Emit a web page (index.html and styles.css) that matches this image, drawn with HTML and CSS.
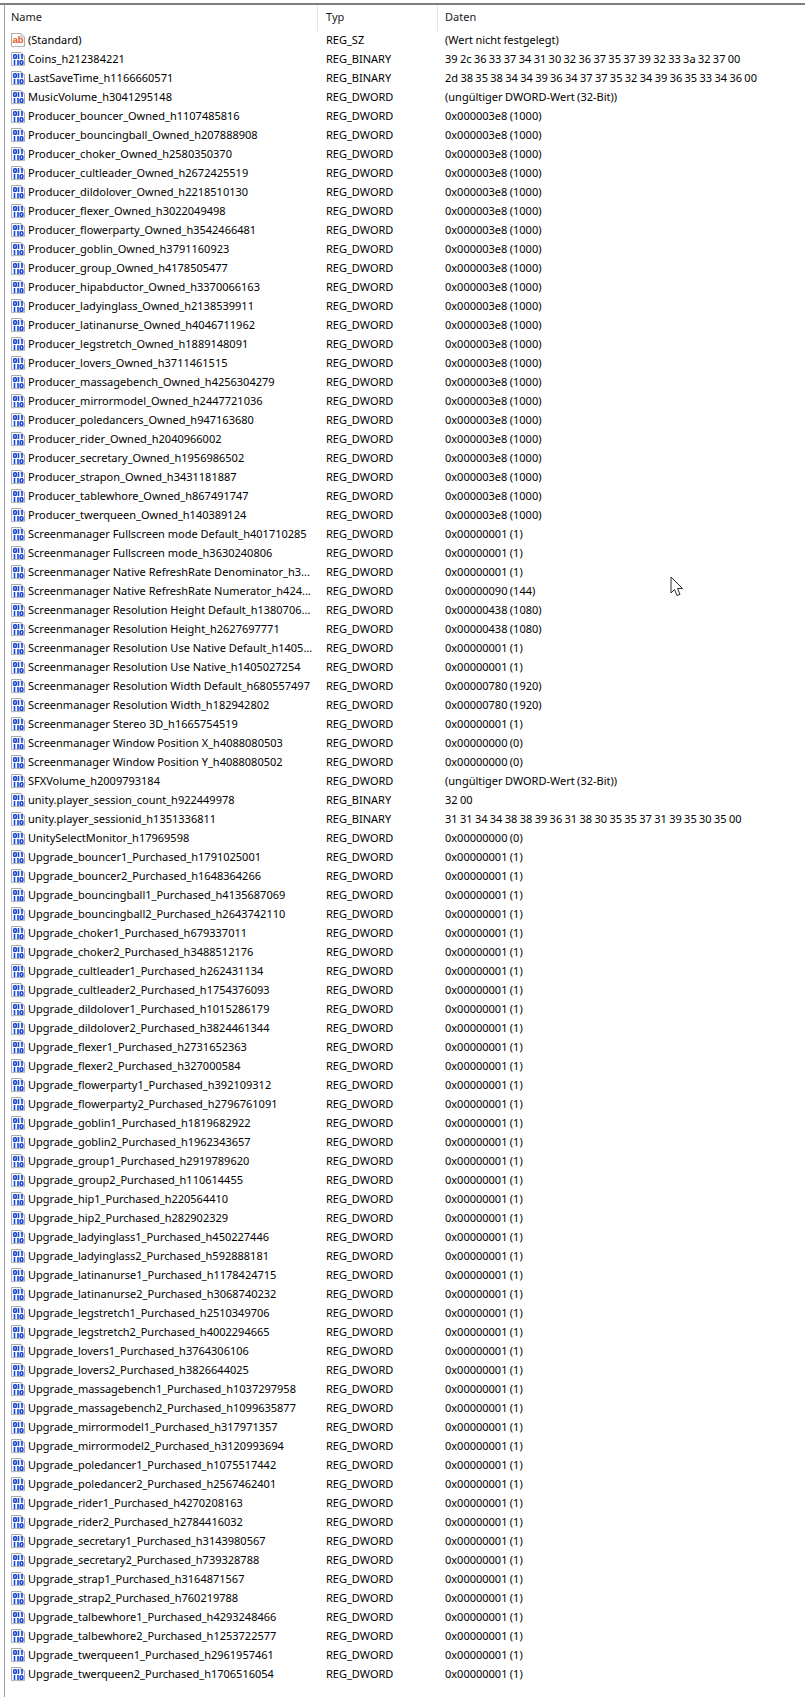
FILE: index.html
```html
<!DOCTYPE html>
<html lang="de">
<head>
    <meta charset="UTF-8">
    <title>Registrierungs-Editor</title>
    <link rel="stylesheet" href="styles.css">
</head>
<body>

    <!-- icon definitions -->
    <svg class="defs" width="0" height="0">
        <symbol id="ico-page" viewBox="0 0 16 16">
            <path d="M1.5 1.5 H11 L14.5 5 V14.5 C12.5 13.5 11 15.5 8 14.5 C5.5 13.5 3.5 15.5 1.5 14.5 Z" fill="#fff" stroke="#a9a9a9"/>
            <path d="M11 1.5 V5 H14.5" fill="#e8e8e8" stroke="#b8b8b8"/>
        </symbol>
        <symbol id="ico-bin" viewBox="0 0 16 16">
            <use href="#ico-page"/>
            <g fill="none" stroke="#1a46d8" stroke-width="1.6">
                <rect x="3.7" y="3.7" width="2.6" height="3.6" rx=".8"/>
                <path d="M8.5 3 V8 M12 3 V8"/>
                <path d="M4.5 9 V14 M8 9 V14"/>
                <rect x="10.2" y="9.7" width="2.6" height="3.6" rx=".8"/>
            </g>
        </symbol>
    </svg>

    <div class="pane">
        <div class="row head">
            <span class="cell">Name</span>
            <span class="cell">Typ</span>
            <span class="cell">Daten</span>
        </div>

        <div class="row"><span class="name"><svg class="ico" viewBox="0 0 16 16"><use href="#ico-page"/><text class="ab" x="2.4" y="11.2">ab</text></svg>(Standard)</span><span>REG_SZ</span><span class="data">(Wert nicht festgelegt)</span></div>
        <div class="row"><span class="name"><svg class="ico"><use href="#ico-bin"/></svg>Coins_h212384221</span><span>REG_BINARY</span><span class="data">39 2c 36 33 37 34 31 30 32 36 37 35 37 39 32 33 3a 32 37 00</span></div>
        <div class="row"><span class="name"><svg class="ico"><use href="#ico-bin"/></svg>LastSaveTime_h1166660571</span><span>REG_BINARY</span><span class="data">2d 38 35 38 34 34 39 36 34 37 37 35 32 34 39 36 35 33 34 36 00</span></div>
        <div class="row"><span class="name"><svg class="ico"><use href="#ico-bin"/></svg>MusicVolume_h3041295148</span><span>REG_DWORD</span><span class="data">(ungültiger DWORD-Wert (32-Bit))</span></div>

        <!-- Producer -->
        <div class="row"><span class="name"><svg class="ico"><use href="#ico-bin"/></svg>Producer_bouncer_Owned_h1107485816</span><span>REG_DWORD</span><span class="data">0x000003e8 (1000)</span></div>
        <div class="row"><span class="name"><svg class="ico"><use href="#ico-bin"/></svg>Producer_bouncingball_Owned_h207888908</span><span>REG_DWORD</span><span class="data">0x000003e8 (1000)</span></div>
        <div class="row"><span class="name"><svg class="ico"><use href="#ico-bin"/></svg>Producer_choker_Owned_h2580350370</span><span>REG_DWORD</span><span class="data">0x000003e8 (1000)</span></div>
        <div class="row"><span class="name"><svg class="ico"><use href="#ico-bin"/></svg>Producer_cultleader_Owned_h2672425519</span><span>REG_DWORD</span><span class="data">0x000003e8 (1000)</span></div>
        <div class="row"><span class="name"><svg class="ico"><use href="#ico-bin"/></svg>Producer_dildolover_Owned_h2218510130</span><span>REG_DWORD</span><span class="data">0x000003e8 (1000)</span></div>
        <div class="row"><span class="name"><svg class="ico"><use href="#ico-bin"/></svg>Producer_flexer_Owned_h3022049498</span><span>REG_DWORD</span><span class="data">0x000003e8 (1000)</span></div>
        <div class="row"><span class="name"><svg class="ico"><use href="#ico-bin"/></svg>Producer_flowerparty_Owned_h3542466481</span><span>REG_DWORD</span><span class="data">0x000003e8 (1000)</span></div>
        <div class="row"><span class="name"><svg class="ico"><use href="#ico-bin"/></svg>Producer_goblin_Owned_h3791160923</span><span>REG_DWORD</span><span class="data">0x000003e8 (1000)</span></div>
        <div class="row"><span class="name"><svg class="ico"><use href="#ico-bin"/></svg>Producer_group_Owned_h4178505477</span><span>REG_DWORD</span><span class="data">0x000003e8 (1000)</span></div>
        <div class="row"><span class="name"><svg class="ico"><use href="#ico-bin"/></svg>Producer_hipabductor_Owned_h3370066163</span><span>REG_DWORD</span><span class="data">0x000003e8 (1000)</span></div>
        <div class="row"><span class="name"><svg class="ico"><use href="#ico-bin"/></svg>Producer_ladyinglass_Owned_h2138539911</span><span>REG_DWORD</span><span class="data">0x000003e8 (1000)</span></div>
        <div class="row"><span class="name"><svg class="ico"><use href="#ico-bin"/></svg>Producer_latinanurse_Owned_h4046711962</span><span>REG_DWORD</span><span class="data">0x000003e8 (1000)</span></div>
        <div class="row"><span class="name"><svg class="ico"><use href="#ico-bin"/></svg>Producer_legstretch_Owned_h1889148091</span><span>REG_DWORD</span><span class="data">0x000003e8 (1000)</span></div>
        <div class="row"><span class="name"><svg class="ico"><use href="#ico-bin"/></svg>Producer_lovers_Owned_h3711461515</span><span>REG_DWORD</span><span class="data">0x000003e8 (1000)</span></div>
        <div class="row"><span class="name"><svg class="ico"><use href="#ico-bin"/></svg>Producer_massagebench_Owned_h4256304279</span><span>REG_DWORD</span><span class="data">0x000003e8 (1000)</span></div>
        <div class="row"><span class="name"><svg class="ico"><use href="#ico-bin"/></svg>Producer_mirrormodel_Owned_h2447721036</span><span>REG_DWORD</span><span class="data">0x000003e8 (1000)</span></div>
        <div class="row"><span class="name"><svg class="ico"><use href="#ico-bin"/></svg>Producer_poledancers_Owned_h947163680</span><span>REG_DWORD</span><span class="data">0x000003e8 (1000)</span></div>
        <div class="row"><span class="name"><svg class="ico"><use href="#ico-bin"/></svg>Producer_rider_Owned_h2040966002</span><span>REG_DWORD</span><span class="data">0x000003e8 (1000)</span></div>
        <div class="row"><span class="name"><svg class="ico"><use href="#ico-bin"/></svg>Producer_secretary_Owned_h1956986502</span><span>REG_DWORD</span><span class="data">0x000003e8 (1000)</span></div>
        <div class="row"><span class="name"><svg class="ico"><use href="#ico-bin"/></svg>Producer_strapon_Owned_h3431181887</span><span>REG_DWORD</span><span class="data">0x000003e8 (1000)</span></div>
        <div class="row"><span class="name"><svg class="ico"><use href="#ico-bin"/></svg>Producer_tablewhore_Owned_h867491747</span><span>REG_DWORD</span><span class="data">0x000003e8 (1000)</span></div>
        <div class="row"><span class="name"><svg class="ico"><use href="#ico-bin"/></svg>Producer_twerqueen_Owned_h140389124</span><span>REG_DWORD</span><span class="data">0x000003e8 (1000)</span></div>

        <!-- Screenmanager -->
        <div class="row"><span class="name"><svg class="ico"><use href="#ico-bin"/></svg>Screenmanager Fullscreen mode Default_h401710285</span><span>REG_DWORD</span><span class="data">0x00000001 (1)</span></div>
        <div class="row"><span class="name"><svg class="ico"><use href="#ico-bin"/></svg>Screenmanager Fullscreen mode_h3630240806</span><span>REG_DWORD</span><span class="data">0x00000001 (1)</span></div>
        <div class="row"><span class="name"><svg class="ico"><use href="#ico-bin"/></svg>Screenmanager Native RefreshRate Denominator_h3...</span><span>REG_DWORD</span><span class="data">0x00000001 (1)</span></div>
        <div class="row"><span class="name"><svg class="ico"><use href="#ico-bin"/></svg>Screenmanager Native RefreshRate Numerator_h424...</span><span>REG_DWORD</span><span class="data">0x00000090 (144)</span></div>
        <div class="row"><span class="name"><svg class="ico"><use href="#ico-bin"/></svg>Screenmanager Resolution Height Default_h1380706...</span><span>REG_DWORD</span><span class="data">0x00000438 (1080)</span></div>
        <div class="row"><span class="name"><svg class="ico"><use href="#ico-bin"/></svg>Screenmanager Resolution Height_h2627697771</span><span>REG_DWORD</span><span class="data">0x00000438 (1080)</span></div>
        <div class="row"><span class="name"><svg class="ico"><use href="#ico-bin"/></svg>Screenmanager Resolution Use Native Default_h1405...</span><span>REG_DWORD</span><span class="data">0x00000001 (1)</span></div>
        <div class="row"><span class="name"><svg class="ico"><use href="#ico-bin"/></svg>Screenmanager Resolution Use Native_h1405027254</span><span>REG_DWORD</span><span class="data">0x00000001 (1)</span></div>
        <div class="row"><span class="name"><svg class="ico"><use href="#ico-bin"/></svg>Screenmanager Resolution Width Default_h680557497</span><span>REG_DWORD</span><span class="data">0x00000780 (1920)</span></div>
        <div class="row"><span class="name"><svg class="ico"><use href="#ico-bin"/></svg>Screenmanager Resolution Width_h182942802</span><span>REG_DWORD</span><span class="data">0x00000780 (1920)</span></div>
        <div class="row"><span class="name"><svg class="ico"><use href="#ico-bin"/></svg>Screenmanager Stereo 3D_h1665754519</span><span>REG_DWORD</span><span class="data">0x00000001 (1)</span></div>
        <div class="row"><span class="name"><svg class="ico"><use href="#ico-bin"/></svg>Screenmanager Window Position X_h4088080503</span><span>REG_DWORD</span><span class="data">0x00000000 (0)</span></div>
        <div class="row"><span class="name"><svg class="ico"><use href="#ico-bin"/></svg>Screenmanager Window Position Y_h4088080502</span><span>REG_DWORD</span><span class="data">0x00000000 (0)</span></div>
        <div class="row"><span class="name"><svg class="ico"><use href="#ico-bin"/></svg>SFXVolume_h2009793184</span><span>REG_DWORD</span><span class="data">(ungültiger DWORD-Wert (32-Bit))</span></div>
        <div class="row"><span class="name"><svg class="ico"><use href="#ico-bin"/></svg>unity.player_session_count_h922449978</span><span>REG_BINARY</span><span class="data">32 00</span></div>
        <div class="row"><span class="name"><svg class="ico"><use href="#ico-bin"/></svg>unity.player_sessionid_h1351336811</span><span>REG_BINARY</span><span class="data">31 31 34 34 38 38 39 36 31 38 30 35 35 37 31 39 35 30 35 00</span></div>
        <div class="row"><span class="name"><svg class="ico"><use href="#ico-bin"/></svg>UnitySelectMonitor_h17969598</span><span>REG_DWORD</span><span class="data">0x00000000 (0)</span></div>

        <!-- Upgrade -->
        <div class="row"><span class="name"><svg class="ico"><use href="#ico-bin"/></svg>Upgrade_bouncer1_Purchased_h1791025001</span><span>REG_DWORD</span><span class="data">0x00000001 (1)</span></div>
        <div class="row"><span class="name"><svg class="ico"><use href="#ico-bin"/></svg>Upgrade_bouncer2_Purchased_h1648364266</span><span>REG_DWORD</span><span class="data">0x00000001 (1)</span></div>
        <div class="row"><span class="name"><svg class="ico"><use href="#ico-bin"/></svg>Upgrade_bouncingball1_Purchased_h4135687069</span><span>REG_DWORD</span><span class="data">0x00000001 (1)</span></div>
        <div class="row"><span class="name"><svg class="ico"><use href="#ico-bin"/></svg>Upgrade_bouncingball2_Purchased_h2643742110</span><span>REG_DWORD</span><span class="data">0x00000001 (1)</span></div>
        <div class="row"><span class="name"><svg class="ico"><use href="#ico-bin"/></svg>Upgrade_choker1_Purchased_h679337011</span><span>REG_DWORD</span><span class="data">0x00000001 (1)</span></div>
        <div class="row"><span class="name"><svg class="ico"><use href="#ico-bin"/></svg>Upgrade_choker2_Purchased_h3488512176</span><span>REG_DWORD</span><span class="data">0x00000001 (1)</span></div>
        <div class="row"><span class="name"><svg class="ico"><use href="#ico-bin"/></svg>Upgrade_cultleader1_Purchased_h262431134</span><span>REG_DWORD</span><span class="data">0x00000001 (1)</span></div>
        <div class="row"><span class="name"><svg class="ico"><use href="#ico-bin"/></svg>Upgrade_cultleader2_Purchased_h1754376093</span><span>REG_DWORD</span><span class="data">0x00000001 (1)</span></div>
        <div class="row"><span class="name"><svg class="ico"><use href="#ico-bin"/></svg>Upgrade_dildolover1_Purchased_h1015286179</span><span>REG_DWORD</span><span class="data">0x00000001 (1)</span></div>
        <div class="row"><span class="name"><svg class="ico"><use href="#ico-bin"/></svg>Upgrade_dildolover2_Purchased_h3824461344</span><span>REG_DWORD</span><span class="data">0x00000001 (1)</span></div>
        <div class="row"><span class="name"><svg class="ico"><use href="#ico-bin"/></svg>Upgrade_flexer1_Purchased_h2731652363</span><span>REG_DWORD</span><span class="data">0x00000001 (1)</span></div>
        <div class="row"><span class="name"><svg class="ico"><use href="#ico-bin"/></svg>Upgrade_flexer2_Purchased_h327000584</span><span>REG_DWORD</span><span class="data">0x00000001 (1)</span></div>
        <div class="row"><span class="name"><svg class="ico"><use href="#ico-bin"/></svg>Upgrade_flowerparty1_Purchased_h392109312</span><span>REG_DWORD</span><span class="data">0x00000001 (1)</span></div>
        <div class="row"><span class="name"><svg class="ico"><use href="#ico-bin"/></svg>Upgrade_flowerparty2_Purchased_h2796761091</span><span>REG_DWORD</span><span class="data">0x00000001 (1)</span></div>
        <div class="row"><span class="name"><svg class="ico"><use href="#ico-bin"/></svg>Upgrade_goblin1_Purchased_h1819682922</span><span>REG_DWORD</span><span class="data">0x00000001 (1)</span></div>
        <div class="row"><span class="name"><svg class="ico"><use href="#ico-bin"/></svg>Upgrade_goblin2_Purchased_h1962343657</span><span>REG_DWORD</span><span class="data">0x00000001 (1)</span></div>
        <div class="row"><span class="name"><svg class="ico"><use href="#ico-bin"/></svg>Upgrade_group1_Purchased_h2919789620</span><span>REG_DWORD</span><span class="data">0x00000001 (1)</span></div>
        <div class="row"><span class="name"><svg class="ico"><use href="#ico-bin"/></svg>Upgrade_group2_Purchased_h110614455</span><span>REG_DWORD</span><span class="data">0x00000001 (1)</span></div>
        <div class="row"><span class="name"><svg class="ico"><use href="#ico-bin"/></svg>Upgrade_hip1_Purchased_h220564410</span><span>REG_DWORD</span><span class="data">0x00000001 (1)</span></div>
        <div class="row"><span class="name"><svg class="ico"><use href="#ico-bin"/></svg>Upgrade_hip2_Purchased_h282902329</span><span>REG_DWORD</span><span class="data">0x00000001 (1)</span></div>
        <div class="row"><span class="name"><svg class="ico"><use href="#ico-bin"/></svg>Upgrade_ladyinglass1_Purchased_h450227446</span><span>REG_DWORD</span><span class="data">0x00000001 (1)</span></div>
        <div class="row"><span class="name"><svg class="ico"><use href="#ico-bin"/></svg>Upgrade_ladyinglass2_Purchased_h592888181</span><span>REG_DWORD</span><span class="data">0x00000001 (1)</span></div>
        <div class="row"><span class="name"><svg class="ico"><use href="#ico-bin"/></svg>Upgrade_latinanurse1_Purchased_h1178424715</span><span>REG_DWORD</span><span class="data">0x00000001 (1)</span></div>
        <div class="row"><span class="name"><svg class="ico"><use href="#ico-bin"/></svg>Upgrade_latinanurse2_Purchased_h3068740232</span><span>REG_DWORD</span><span class="data">0x00000001 (1)</span></div>
        <div class="row"><span class="name"><svg class="ico"><use href="#ico-bin"/></svg>Upgrade_legstretch1_Purchased_h2510349706</span><span>REG_DWORD</span><span class="data">0x00000001 (1)</span></div>
        <div class="row"><span class="name"><svg class="ico"><use href="#ico-bin"/></svg>Upgrade_legstretch2_Purchased_h4002294665</span><span>REG_DWORD</span><span class="data">0x00000001 (1)</span></div>
        <div class="row"><span class="name"><svg class="ico"><use href="#ico-bin"/></svg>Upgrade_lovers1_Purchased_h3764306106</span><span>REG_DWORD</span><span class="data">0x00000001 (1)</span></div>
        <div class="row"><span class="name"><svg class="ico"><use href="#ico-bin"/></svg>Upgrade_lovers2_Purchased_h3826644025</span><span>REG_DWORD</span><span class="data">0x00000001 (1)</span></div>
        <div class="row"><span class="name"><svg class="ico"><use href="#ico-bin"/></svg>Upgrade_massagebench1_Purchased_h1037297958</span><span>REG_DWORD</span><span class="data">0x00000001 (1)</span></div>
        <div class="row"><span class="name"><svg class="ico"><use href="#ico-bin"/></svg>Upgrade_massagebench2_Purchased_h1099635877</span><span>REG_DWORD</span><span class="data">0x00000001 (1)</span></div>
        <div class="row"><span class="name"><svg class="ico"><use href="#ico-bin"/></svg>Upgrade_mirrormodel1_Purchased_h317971357</span><span>REG_DWORD</span><span class="data">0x00000001 (1)</span></div>
        <div class="row"><span class="name"><svg class="ico"><use href="#ico-bin"/></svg>Upgrade_mirrormodel2_Purchased_h3120993694</span><span>REG_DWORD</span><span class="data">0x00000001 (1)</span></div>
        <div class="row"><span class="name"><svg class="ico"><use href="#ico-bin"/></svg>Upgrade_poledancer1_Purchased_h1075517442</span><span>REG_DWORD</span><span class="data">0x00000001 (1)</span></div>
        <div class="row"><span class="name"><svg class="ico"><use href="#ico-bin"/></svg>Upgrade_poledancer2_Purchased_h2567462401</span><span>REG_DWORD</span><span class="data">0x00000001 (1)</span></div>
        <div class="row"><span class="name"><svg class="ico"><use href="#ico-bin"/></svg>Upgrade_rider1_Purchased_h4270208163</span><span>REG_DWORD</span><span class="data">0x00000001 (1)</span></div>
        <div class="row"><span class="name"><svg class="ico"><use href="#ico-bin"/></svg>Upgrade_rider2_Purchased_h2784416032</span><span>REG_DWORD</span><span class="data">0x00000001 (1)</span></div>
        <div class="row"><span class="name"><svg class="ico"><use href="#ico-bin"/></svg>Upgrade_secretary1_Purchased_h3143980567</span><span>REG_DWORD</span><span class="data">0x00000001 (1)</span></div>
        <div class="row"><span class="name"><svg class="ico"><use href="#ico-bin"/></svg>Upgrade_secretary2_Purchased_h739328788</span><span>REG_DWORD</span><span class="data">0x00000001 (1)</span></div>
        <div class="row"><span class="name"><svg class="ico"><use href="#ico-bin"/></svg>Upgrade_strap1_Purchased_h3164871567</span><span>REG_DWORD</span><span class="data">0x00000001 (1)</span></div>
        <div class="row"><span class="name"><svg class="ico"><use href="#ico-bin"/></svg>Upgrade_strap2_Purchased_h760219788</span><span>REG_DWORD</span><span class="data">0x00000001 (1)</span></div>
        <div class="row"><span class="name"><svg class="ico"><use href="#ico-bin"/></svg>Upgrade_talbewhore1_Purchased_h4293248466</span><span>REG_DWORD</span><span class="data">0x00000001 (1)</span></div>
        <div class="row"><span class="name"><svg class="ico"><use href="#ico-bin"/></svg>Upgrade_talbewhore2_Purchased_h1253722577</span><span>REG_DWORD</span><span class="data">0x00000001 (1)</span></div>
        <div class="row"><span class="name"><svg class="ico"><use href="#ico-bin"/></svg>Upgrade_twerqueen1_Purchased_h2961957461</span><span>REG_DWORD</span><span class="data">0x00000001 (1)</span></div>
        <div class="row"><span class="name"><svg class="ico"><use href="#ico-bin"/></svg>Upgrade_twerqueen2_Purchased_h1706516054</span><span>REG_DWORD</span><span class="data">0x00000001 (1)</span></div>
    </div>

    <!-- mouse pointer -->
    <svg class="pointer" width="14" height="22" viewBox="0 0 14 22">
        <path d="M1 1 V17 L4.5 13.5 L7 19.5 L10 18.3 L7.5 12.5 H12.5 Z" fill="#fff" stroke="#2a2a35"/>
    </svg>

</body>
</html>
```

FILE: styles.css
```css
html, body {
    margin: 0;
    height: 100%;
    overflow: hidden;
    background-color: #fff;
}

body {
    position: relative;
    box-sizing: border-box;
    padding-top: 3px;
    font-family: "Noto Sans", "Open Sans", sans-serif;
    font-size: 11px;
    line-height: 16px;
    color: #000;
}

.defs {
    position: absolute;
}

/* pane with the dark line on top and left */
.pane {
    box-sizing: border-box;
    height: 100%;
    padding-left: 4px;
    border-top: 2px solid #7f7f7f;
    background: linear-gradient(#a0a0a0, #a0a0a0) 4px 0 / 1px 100% no-repeat;
}

.row {
    box-sizing: border-box;
    display: grid;
    grid-template-columns: 314px 120px 1fr;
    align-items: center;
    height: 19px;
    padding-bottom: 1px;
    white-space: nowrap;
}

.row > span {
    padding-left: 8px;
}

.row > .name {
    display: flex;
    align-items: center;
    gap: 2px;
    padding-left: 6px;
}

/* hex bytes run a bit tighter than this font */
.row > .data {
    padding-left: 7px;
    word-spacing: -0.5px;
}

.row.head {
    height: 26px;
    padding-bottom: 0;
    align-items: stretch;
    color: #1a1a1a;
}

.head .cell {
    display: flex;
    align-items: center;
    padding-bottom: 3px;
    border-right: 1px solid #e5e5e5;
}

.head .cell:first-child {
    padding-left: 7px;
}

.head .cell:last-child {
    padding-left: 7px;
    border-right: 0;
}

.ico {
    flex-shrink: 0;
    width: 16px;
    height: 16px;
}

.ab {
    font-family: "Liberation Sans", sans-serif;
    font-size: 9.5px;
    font-weight: 700;
    fill: #e8521e;
}

.pointer {
    position: absolute;
    left: 670px;
    top: 576px;
}
```
